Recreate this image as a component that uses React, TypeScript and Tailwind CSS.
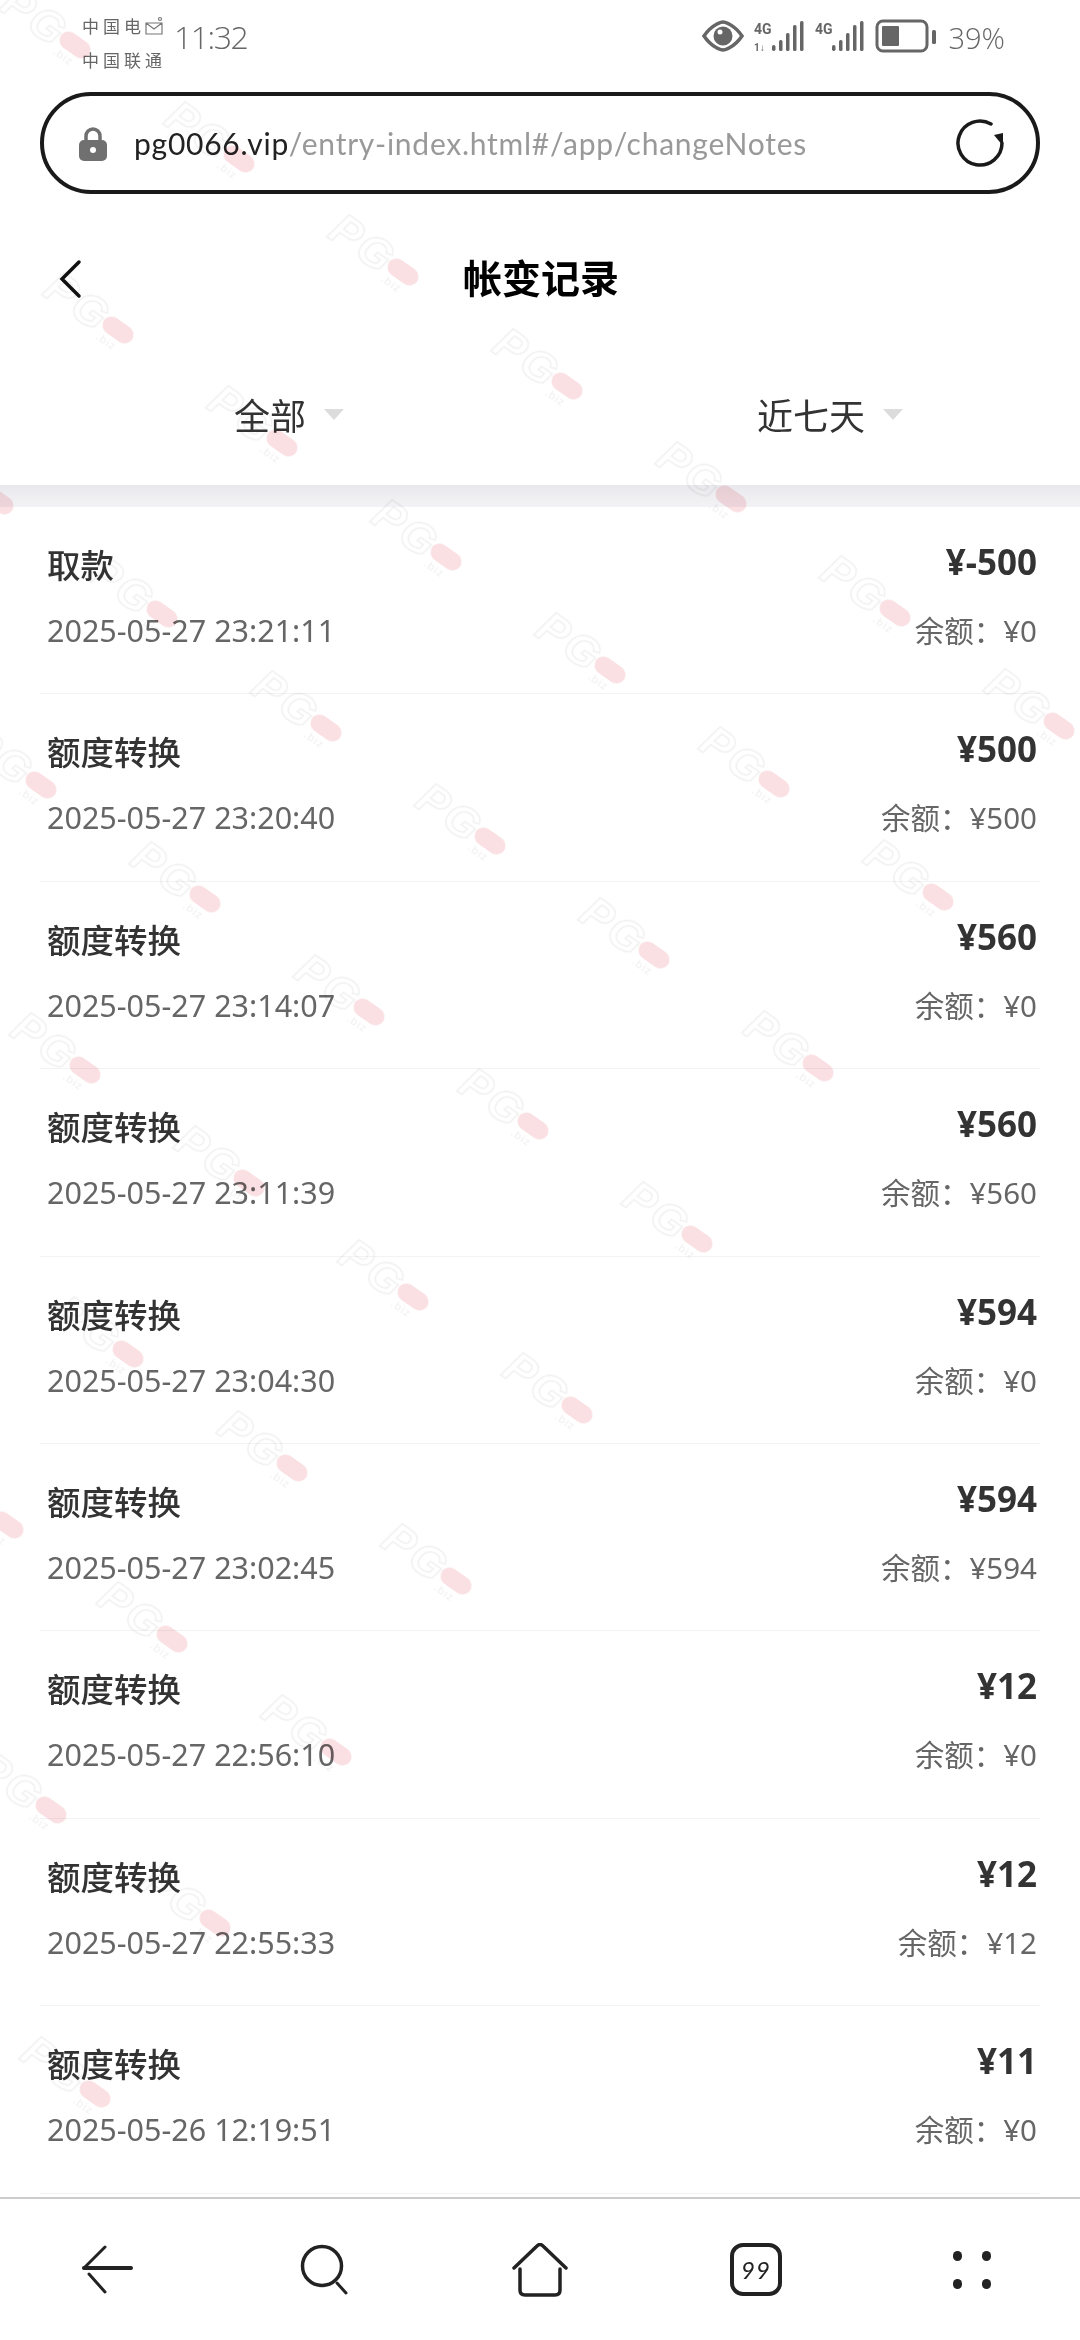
import { FC } from 'react'

const rows = [
  { title: '取款', amount: '¥-500', time: '2025-05-27 23:21:11', balance: '¥0' },
  { title: '额度转换', amount: '¥500', time: '2025-05-27 23:20:40', balance: '¥500' },
  { title: '额度转换', amount: '¥560', time: '2025-05-27 23:14:07', balance: '¥0' },
  { title: '额度转换', amount: '¥560', time: '2025-05-27 23:11:39', balance: '¥560' },
  { title: '额度转换', amount: '¥594', time: '2025-05-27 23:04:30', balance: '¥0' },
  { title: '额度转换', amount: '¥594', time: '2025-05-27 23:02:45', balance: '¥594' },
  { title: '额度转换', amount: '¥12', time: '2025-05-27 22:56:10', balance: '¥0' },
  { title: '额度转换', amount: '¥12', time: '2025-05-27 22:55:33', balance: '¥12' },
  { title: '额度转换', amount: '¥11', time: '2025-05-26 12:19:51', balance: '¥0' },
]

// watermark lattice, pill centres measured on the reference.
// the marks stop along two edges, hence j <= 1 and i + j <= 4
const marks: { x: number; y: number }[] = []
for (let i = -8; i < 22; i++) {
  for (let j = -10; j <= 1; j++) {
    if (i + j > 4) continue
    const x = 282 + i * 164 + j * 284.5
    const y = 443 + i * 113.5 - j * 57.5
    if (x > -30 && x < 1120 && y > -10 && y < 2180) marks.push({ x, y })
  }
}

const Watermark: FC<{ x: number; y: number }> = ({ x, y }) => (
  <div className="absolute w-0 h-0 rotate-[35deg] blur-[0.6px]" style={{ left: x, top: y }}>
    <div className="absolute right-[14px] top-[-27px] font-['Liberation_Sans',sans-serif] font-bold italic text-[44px] leading-[54px] tracking-[3px] text-transparent [-webkit-text-stroke:1.5px_#f1f1f1]">
      PG
    </div>
    <div className="absolute left-[-17px] top-[-9px] w-[34px] h-[18px] rounded-full bg-[#fae0e3]" />
    <div className="absolute left-[-14px] top-[9px] text-[11px] leading-[14px] tracking-[1px] text-[#efefef]">
      .biz
    </div>
  </div>
)

const StatusIcons: FC = () => (
  <svg width="240" height="40" viewBox="0 0 240 40" className="text-[#666]" fill="currentColor">
    {/* eye */}
    <path d="M2 18 C10 6 20 4 21 4 C22 4 32 6 40 18 C32 30 22 32 21 32 C20 32 10 30 2 18 Z" fill="none" stroke="currentColor" strokeWidth="3.5" />
    <circle cx="21" cy="18" r="9.5" />
    <circle cx="18" cy="14" r="2.5" fill="#fff" />
    {/* sim 1 */}
    <text x="52" y="16" fontSize="14" fontWeight="700" fontFamily="Roboto, sans-serif">4G</text>
    <text x="52" y="33" fontSize="10" fontWeight="700" fontFamily="Roboto, sans-serif">1↓</text>
    <rect x="70" y="27" width="3.5" height="6" rx="1.7" />
    <rect x="77" y="22" width="3.5" height="11" rx="1.5" />
    <rect x="84" y="15" width="3.5" height="18" rx="1.5" />
    <rect x="91" y="7" width="3.5" height="26" rx="1.5" />
    <rect x="98" y="3" width="3.5" height="30" rx="1.5" />
    {/* sim 2 */}
    <text x="113" y="16" fontSize="14" fontWeight="700" fontFamily="Roboto, sans-serif">4G</text>
    <rect x="130" y="27" width="3.5" height="6" rx="1.7" />
    <rect x="137" y="22" width="3.5" height="11" rx="1.5" />
    <rect x="144" y="15" width="3.5" height="18" rx="1.5" />
    <rect x="151" y="7" width="3.5" height="26" rx="1.5" />
    <rect x="158" y="3" width="3.5" height="30" rx="1.5" />
    {/* battery */}
    <rect x="175" y="3" width="50" height="30" rx="6" fill="none" stroke="currentColor" strokeWidth="3" />
    <rect x="180" y="8" width="17" height="20" rx="1" />
    <rect x="230" y="12" width="4" height="14" rx="1.5" />
  </svg>
)

const BackArrow: FC = () => (
  <svg width="54" height="50" viewBox="0 0 54 50" fill="none" stroke="#222" strokeLinecap="round">
    <path d="M3 23 H50" strokeWidth="4" />
    <path d="M3 23 L24 2" strokeWidth="3" />
    <path d="M8 29 L24 47" strokeWidth="3" />
  </svg>
)

const SearchIcon: FC = () => (
  <svg width="50" height="52" viewBox="0 0 50 52" fill="none" stroke="#222" strokeWidth="3.5" strokeLinecap="round">
    <circle cx="23" cy="22" r="19.5" />
    <path d="M38 39 L47 49" strokeWidth="3" />
  </svg>
)

const HomeIcon: FC = () => (
  <svg width="56" height="54" viewBox="0 0 56 54" fill="none" stroke="#222" strokeWidth="3.5" strokeLinecap="round">
    <path d="M2 25 L25 3 Q28 0 31 3 L54 25" />
    <path d="M8 26 V47 Q8 52 13 52 H43 Q48 52 48 47 V26" />
  </svg>
)

const TabsIcon: FC = () => (
  <div className="w-[52px] h-[53px] rounded-[13px] border-[4px] border-[#222] flex items-center justify-center font-['Lato',sans-serif] italic text-[24px] leading-none tracking-[1px] text-[#222]">
    99
  </div>
)

const MoreIcon: FC = () => (
  <div className="grid grid-cols-2 gap-x-[20px] gap-y-[18px]">
    <span className="w-[9px] h-[10px] rounded-full bg-[#222]" />
    <span className="w-[9px] h-[10px] rounded-full bg-[#222]" />
    <span className="w-[9px] h-[10px] rounded-full bg-[#222]" />
    <span className="w-[9px] h-[10px] rounded-full bg-[#222]" />
  </div>
)

const App: FC = () => {
  return (
    <div className="relative w-[1080px] h-[2340px] overflow-hidden bg-white flex flex-col font-['Noto_Sans','Noto_Sans_CJK_SC',sans-serif]">
      {/* Status bar */}
      <div className="h-[92px] shrink-0 flex items-start justify-between pl-[82px] pr-[75px]">
        <div className="flex items-start">
          <div className="w-[92px] pt-[9px] text-[17px] leading-[34px] tracking-[4px] text-[#666] font-['Noto_Sans_CJK_SC',sans-serif]">
            <div className="flex items-center">
              中国电
              <svg width="20" height="20" viewBox="0 0 20 20" fill="none" stroke="#777" strokeWidth="1.2" className="ml-[-1px]">
                <path d="M2 7 H18 V18 H2 Z M2 7 L10 13 L18 7" />
                <circle cx="16" cy="3" r="1.5" />
              </svg>
            </div>
            <div>中国联通</div>
          </div>
          <div className="pt-[12px] text-[32px] leading-[50px] font-light tracking-[-1.5px] text-[#666] font-['Open_Sans',sans-serif]">
            11:32
          </div>
        </div>
        <div className="flex items-center pt-[18px]">
          <StatusIcons />
          <span className="ml-[6px] text-[29px] leading-[40px] font-light text-[#666] font-['Open_Sans',sans-serif]">
            39%
          </span>
        </div>
      </div>

      {/* Address bar */}
      <div className="mx-[40px] h-[102px] shrink-0 rounded-full border-[4px] border-[#1a1a1a] flex items-center pl-[35px] pr-[31px]">
        <svg width="28" height="34" viewBox="0 0 28 34" className="shrink-0 mt-[2px]">
          <path d="M7 15 V9 a7 7 0 0 1 14 0 V15" fill="none" stroke="#707070" strokeWidth="3.5" />
          <rect x="0" y="13" width="28" height="21" rx="5" fill="#707070" />
          <circle cx="14" cy="23" r="3" fill="#fff" />
        </svg>
        <div className="ml-[27px] flex-1 text-[30px] leading-[40px] tracking-[0.75px] text-[#999] font-['Lato',sans-serif] whitespace-nowrap">
          <span className="text-[#222]">pg0066.vip</span>/entry-index.html#/app/changeNotes
        </div>
        <svg width="50" height="50" viewBox="0 0 50 50" fill="none" className="shrink-0">
          <path d="M47 25 A 22 22 0 1 1 36 6" stroke="#1a1a1a" strokeWidth="3.5" strokeLinecap="round" />
          <path d="M48 28 L39 17 L48 15 Z" fill="#1a1a1a" />
        </svg>
      </div>

      {/* Title */}
      <div className="relative h-[170px] shrink-0 flex items-center justify-center">
        <svg width="24" height="40" viewBox="0 0 24 40" fill="none" stroke="#111" strokeWidth="3.5" strokeLinecap="round" className="absolute left-[58px] top-[65px]">
          <path d="M21 3 L4 20 L21 37" />
        </svg>
        <span className="mb-[6px] ml-[2px] text-[39px] leading-[50px] font-bold text-black font-['Noto_Sans_CJK_SC',sans-serif]">
          帐变记录
        </span>
      </div>

      {/* Filters */}
      <div className="h-[121px] shrink-0 pb-[21px] flex items-center">
        <div className="w-[540px] flex items-center pl-[234px]">
          <span className="text-[36px] leading-[50px] text-[#333] font-['Noto_Sans_CJK_SC',sans-serif]">全部</span>
          <span className="ml-[18px] w-0 h-0 border-x-[10px] border-x-transparent border-t-[11px] border-t-[#dcdcdc]" />
        </div>
        <div className="flex items-center pl-[217px]">
          <span className="text-[36px] leading-[50px] text-[#333] font-['Noto_Sans_CJK_SC',sans-serif]">近七天</span>
          <span className="ml-[18px] w-0 h-0 border-x-[10px] border-x-transparent border-t-[11px] border-t-[#dcdcdc]" />
        </div>
      </div>

      <div className="h-[22px] shrink-0 bg-gradient-to-b from-[#e9e9ed] to-[#f3f3f6]" />

      {/* List */}
      <div className="flex-1 overflow-hidden">
        {rows.map(row => (
          <div key={row.time} className="h-[187.4px] mx-[40px] pl-[7px] pr-[3px] pt-[30px] border-b border-[#f3f3f3]">
            <div className="h-[60px] flex justify-between items-center">
              <span className="mb-[6px] text-[33.5px] leading-[60px] font-medium text-[#333] font-['Noto_Sans_CJK_SC',sans-serif]">
                {row.title}
              </span>
              <span className="mb-[10px] text-[35px] leading-[60px] font-bold text-[#333]">{row.amount}</span>
            </div>
            <div className="mt-[13px] h-[40px] flex justify-between items-center text-[#666]">
              <span className="text-[30.5px] leading-[40px]">{row.time}</span>
              <span className="text-[29.5px] leading-[40px]">
                <span className="font-['Noto_Sans_CJK_SC',sans-serif]">余额：</span>
                {row.balance}
              </span>
            </div>
          </div>
        ))}
      </div>

      {/* Watermarks */}
      <div className="absolute inset-0 pointer-events-none mix-blend-multiply">
        {marks.map(m => (
          <Watermark key={`${m.x}-${m.y}`} x={m.x} y={m.y} />
        ))}
      </div>

      {/* Bottom nav */}
      <div className="relative z-10 h-[143px] shrink-0 bg-white border-t-2 border-[#cccccc] grid grid-cols-5 items-center justify-items-center">
        <BackArrow />
        <SearchIcon />
        <HomeIcon />
        <TabsIcon />
        <MoreIcon />
      </div>
    </div>
  )
}

export default App
